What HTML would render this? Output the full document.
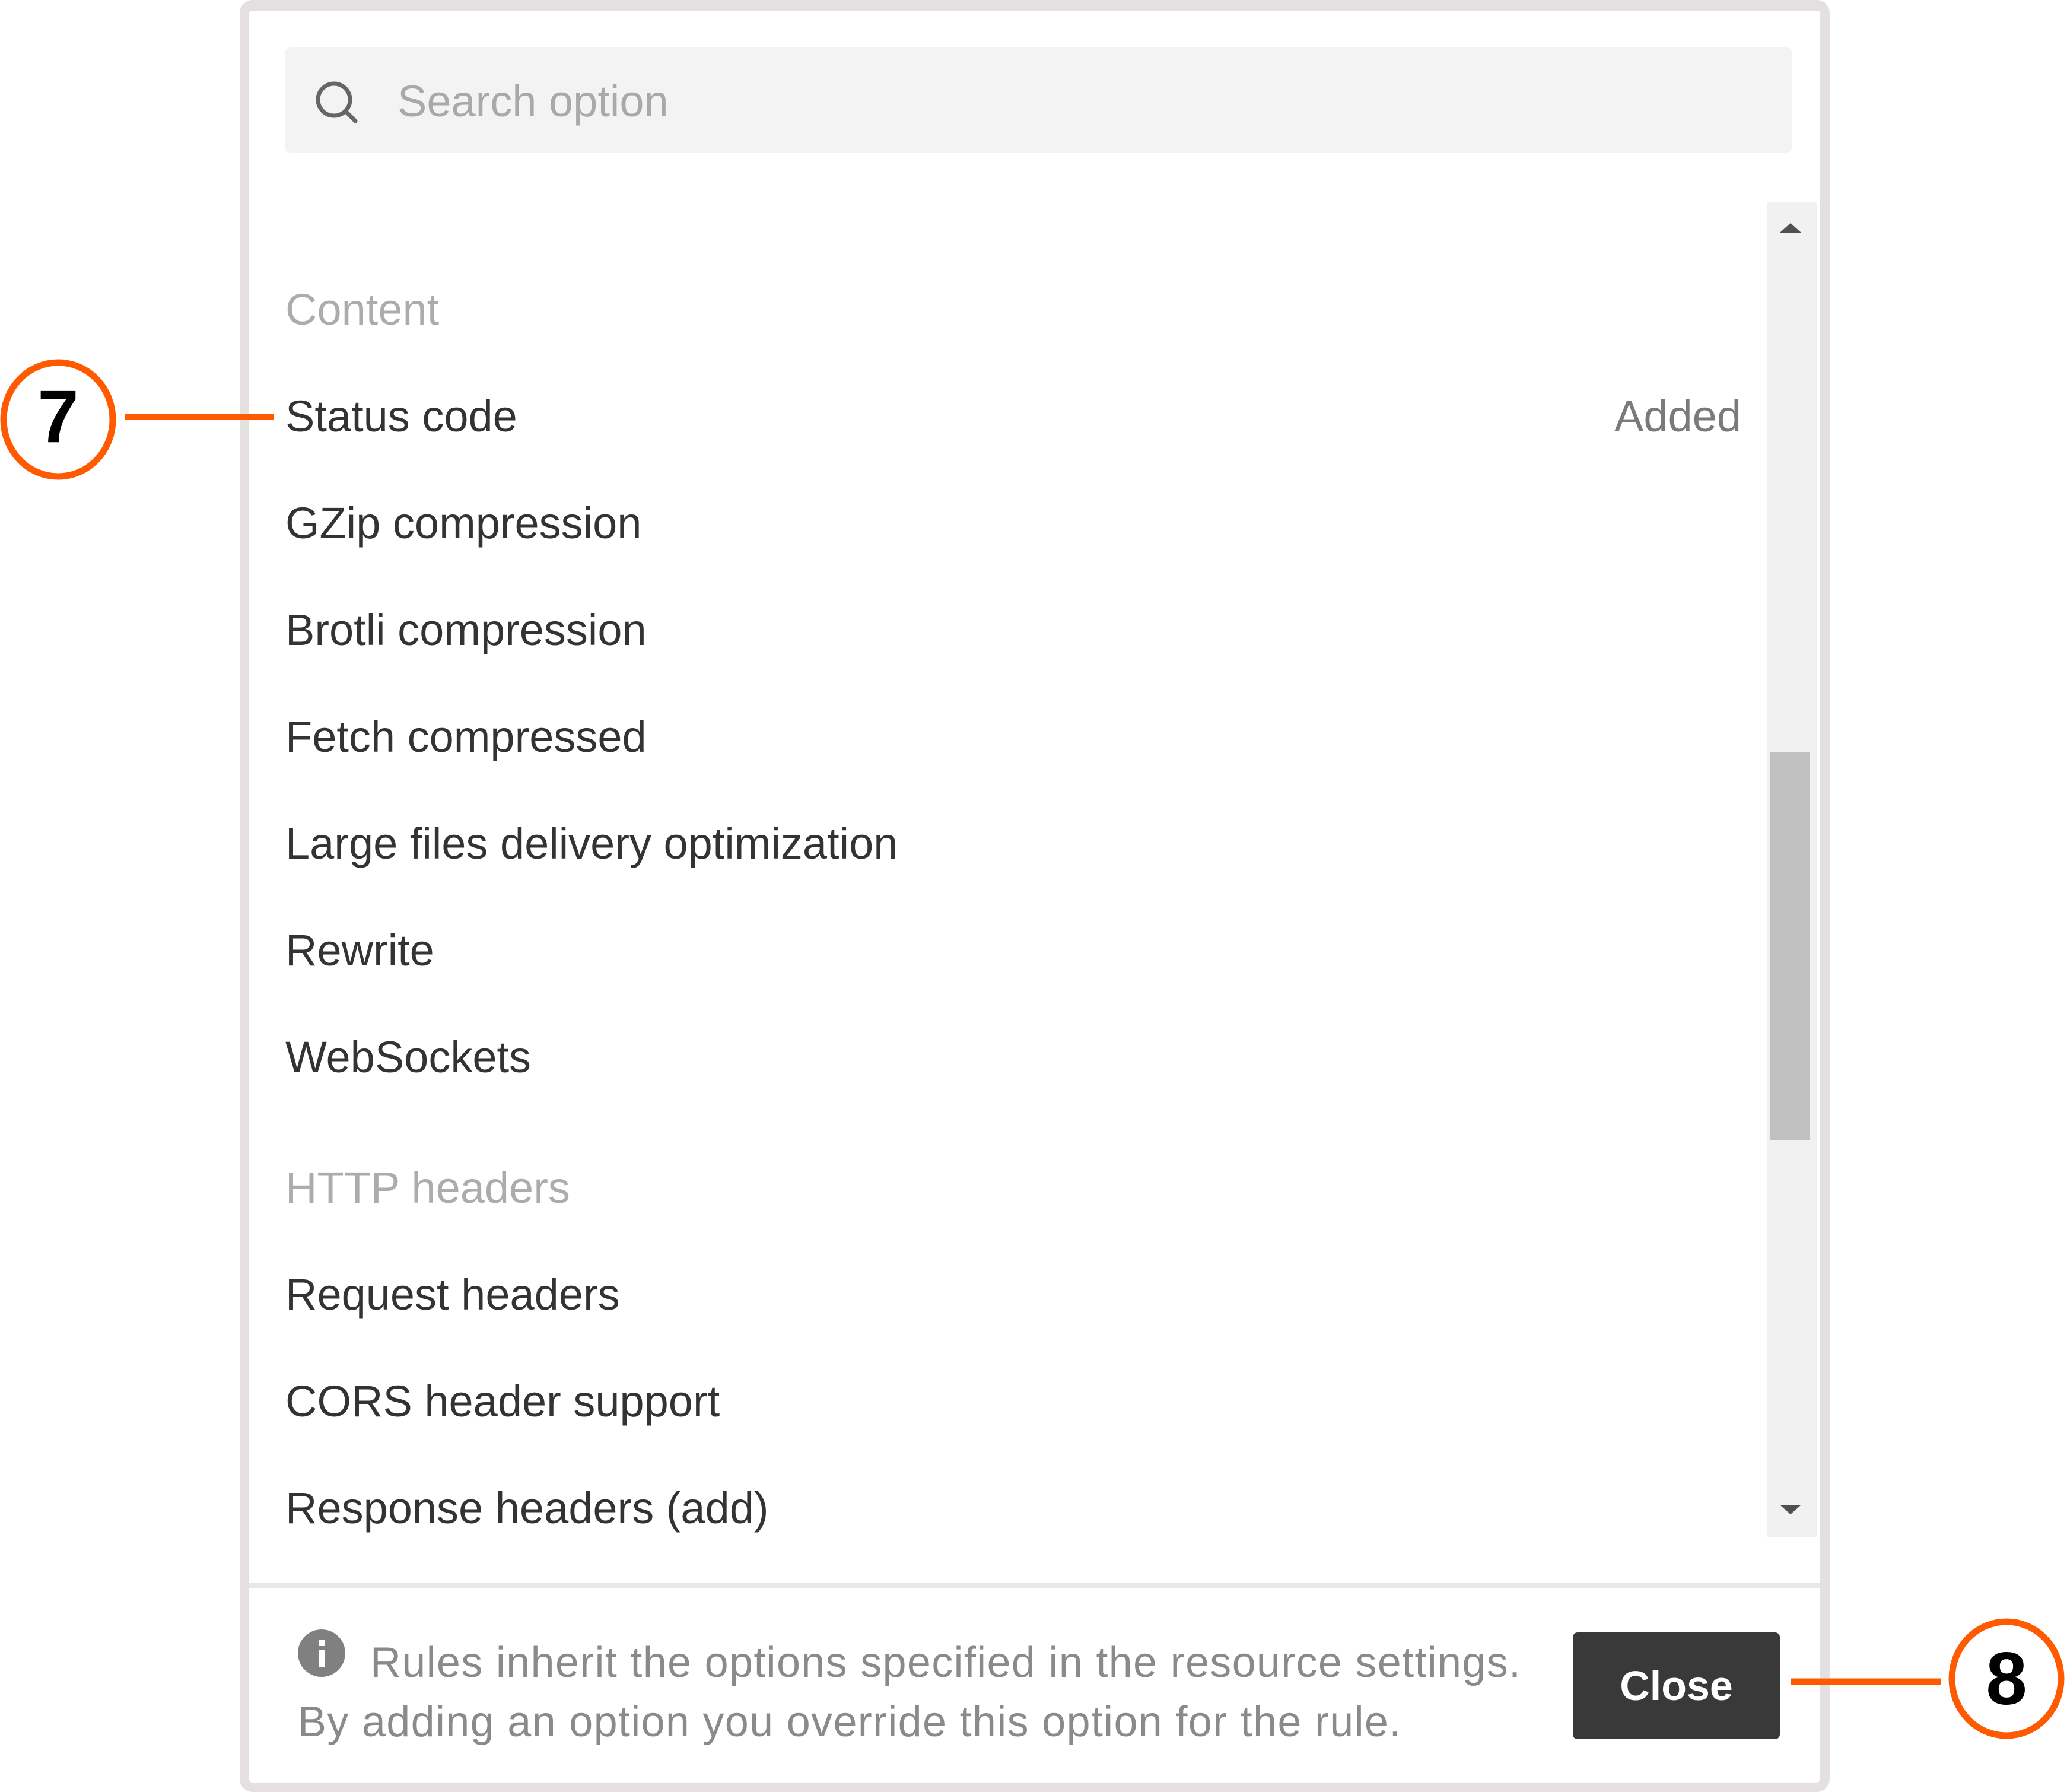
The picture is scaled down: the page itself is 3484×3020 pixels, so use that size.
<!DOCTYPE html>
<html><head><meta charset="utf-8"><style>
*{margin:0;padding:0;box-sizing:border-box}
body{width:3484px;height:3020px;background:#fff;position:relative;overflow:hidden;font-family:"Liberation Sans",sans-serif}
.a{position:absolute;white-space:nowrap}
.panel{position:absolute;left:404px;top:0;width:2680px;height:3020px;border:16px solid #e3e0df;border-top-width:18px;border-radius:22px;background:#fff}
.t{position:absolute;left:481px;height:100px;line-height:100px;font-size:74px;color:#333;white-space:nowrap}
.h{color:#acacac}
</style></head><body>
<div class="panel"></div>
<div class="a" style="left:480px;top:80px;width:2540px;height:178px;background:#f3f3f3;border-radius:10px"></div>
<svg class="a" style="left:525px;top:130px" width="84" height="84" viewBox="0 0 84 84"><circle cx="38" cy="38" r="27" fill="none" stroke="#666" stroke-width="7"/><line x1="58" y1="58" x2="74" y2="74" stroke="#666" stroke-width="7" stroke-linecap="round"/></svg>
<div class="a" style="left:670px;top:121px;line-height:100px;font-size:74px;color:#a9a9a9">Search option</div>

<div class="t h" style="top:472px">Content</div>
<div class="t" style="top:652px">Status code</div>
<div class="a" style="right:549px;top:652px;line-height:100px;font-size:74px;color:#7a7a7a">Added</div>
<div class="t" style="top:832px">GZip compression</div>
<div class="t" style="top:1012px">Brotli compression</div>
<div class="t" style="top:1192px">Fetch compressed</div>
<div class="t" style="top:1372px">Large files delivery optimization</div>
<div class="t" style="top:1552px">Rewrite</div>
<div class="t" style="top:1732px">WebSockets</div>
<div class="t h" style="top:1952px">HTTP headers</div>
<div class="t" style="top:2132px">Request headers</div>
<div class="t" style="top:2312px">CORS header support</div>
<div class="t" style="top:2492px">Response headers (add)</div>

<div class="a" style="left:2978px;top:340px;width:84px;height:2251px;background:#f1f1f1"></div>
<div class="a" style="left:2984px;top:1267px;width:67px;height:655px;background:#c1c1c1"></div>
<svg class="a" style="left:2998px;top:372px" width="40" height="24"><polygon points="20,4 38,20 2,20" fill="#505050"/></svg>
<svg class="a" style="left:2998px;top:2532px" width="40" height="24"><polygon points="2,4 38,4 20,20" fill="#505050"/></svg>

<div class="a" style="left:420px;top:2668px;width:2648px;height:8px;background:#e8e8e8"></div>

<svg class="a" style="left:502px;top:2746px" width="80" height="80"><circle cx="40" cy="40" r="40" fill="#808080"/><rect x="35" y="18" width="10" height="10" fill="#fff"/><rect x="35" y="34" width="10" height="30" fill="#fff"/></svg>
<div class="a" style="left:624px;top:2752px;line-height:100px;font-size:72px;letter-spacing:1.3px;color:#8a8a8a">Rules inherit the options specified in the resource settings.</div>
<div class="a" style="left:502px;top:2852px;line-height:100px;font-size:72px;letter-spacing:1.3px;color:#8a8a8a">By adding an option you override this option for the rule.</div>

<div class="a" style="left:2651px;top:2751px;width:349px;height:180px;background:#393939;border-radius:8px;color:#fff;font-size:70px;line-height:180px;text-align:center;font-weight:bold">Close</div>

<svg class="a" style="left:0;top:600px" width="470" height="220">
<ellipse cx="98" cy="107" rx="92" ry="96" fill="#fff" stroke="#ff5a00" stroke-width="11"/>
<line x1="211" y1="102" x2="462" y2="102" stroke="#ff5a00" stroke-width="10"/>
<text x="98" y="145" font-family="Liberation Sans" font-weight="bold" font-size="125" text-anchor="middle" fill="#000">7</text>
</svg>
<svg class="a" style="left:3010px;top:2720px" width="474" height="220">
<line x1="8" y1="114" x2="262" y2="114" stroke="#ff5a00" stroke-width="11"/>
<ellipse cx="372" cy="109" rx="92" ry="96" fill="#fff" stroke="#ff5a00" stroke-width="11"/>
<text x="372" y="152" font-family="Liberation Sans" font-weight="bold" font-size="125" text-anchor="middle" fill="#000">8</text>
</svg>
</body></html>
